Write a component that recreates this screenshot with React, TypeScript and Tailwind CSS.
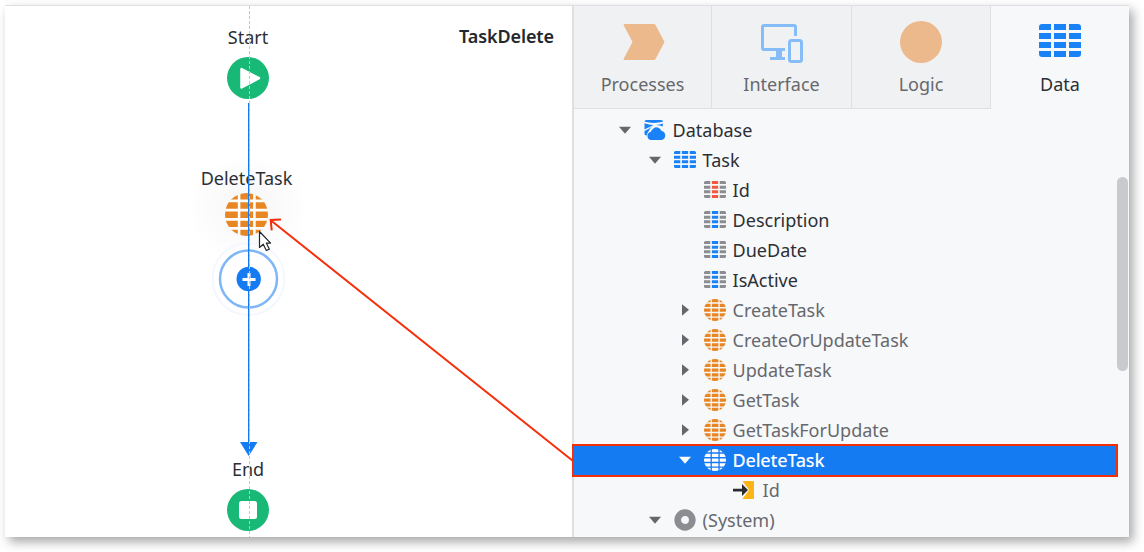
import React from "react";

type IconKind = "database" | "entity" | "key" | "attribute" | "action" | "actionSelected" | "input" | "system";
type Arrow = "open" | "closed" | "none";

interface TreeItem {
  label: string;
  level: 0 | 1 | 2 | 3;
  icon: IconKind;
  arrow: Arrow;
  muted?: boolean;
  selected?: boolean;
}

const items: TreeItem[] = [
  { label: "Database", level: 0, icon: "database", arrow: "open" },
  { label: "Task", level: 1, icon: "entity", arrow: "open" },
  { label: "Id", level: 2, icon: "key", arrow: "none" },
  { label: "Description", level: 2, icon: "attribute", arrow: "none" },
  { label: "DueDate", level: 2, icon: "attribute", arrow: "none" },
  { label: "IsActive", level: 2, icon: "attribute", arrow: "none" },
  { label: "CreateTask", level: 2, icon: "action", arrow: "closed", muted: true },
  { label: "CreateOrUpdateTask", level: 2, icon: "action", arrow: "closed", muted: true },
  { label: "UpdateTask", level: 2, icon: "action", arrow: "closed", muted: true },
  { label: "GetTask", level: 2, icon: "action", arrow: "closed", muted: true },
  { label: "GetTaskForUpdate", level: 2, icon: "action", arrow: "closed", muted: true },
  { label: "DeleteTask", level: 2, icon: "actionSelected", arrow: "open", selected: true },
  { label: "Id", level: 3, icon: "input", arrow: "none", muted: true },
  { label: "(System)", level: 1, icon: "system", arrow: "open", muted: true },
];

const indent = ["pl-9", "pl-[66px]", "pl-24", "pl-[126px]"];

function TableIcon({ side, middle, className }: { side: string; middle: string; className: string }) {
  return (
    <svg viewBox="0 0 42 33" className={className} preserveAspectRatio="none">
      <path fill={side} d="M3 0h9v6H0V3a3 3 0 0 1 3-3zM30 0h9a3 3 0 0 1 3 3v3H30zM0 9h12v6H0zM30 9h12v6H30zM0 18h12v6H0zM30 18h12v6H30zM0 27h12v6H3a3 3 0 0 1-3-3zM30 27h12v3a3 3 0 0 1-3 3h-9z" />
      <path fill={middle} d="M15 0h12v6H15zM15 9h12v6H15zM15 18h12v6H15zM15 27h12v6H15z" />
    </svg>
  );
}

function GlobeIcon({ color, id, className }: { color: string; id: string; className: string }) {
  return (
    <svg viewBox="0 0 42 42" className={className}>
      <clipPath id={id}>
        <circle cx="21" cy="21" r="21" />
      </clipPath>
      <g clipPath={`url(#${id})`} fill={color}>
        {[0, 9, 18, 27, 36].map((y) => (
          <path key={y} d={`M0 ${y}h12.5v6.3H0zM15 ${y}h12.5v6.3H15zM30 ${y}h12v6.3H30z`} />
        ))}
      </g>
    </svg>
  );
}

function NodeIcon({ kind, id }: { kind: IconKind; id: string }) {
  switch (kind) {
    case "database":
      return (
        <svg viewBox="0 0 22 20" className="h-5 w-[22px]">
          <path fill="#1a82f7" d="M0.5 1.8Q0.5 0 2.5 0h14.500Q19 0 19 1.800Q10 4 0.500 1.800z" />
          <path fill="#1a82f7" d="M0.500 3.300Q5 5 9.500 5L0.500 9.500zM12 4.900Q16 4.500 18.800 3.400V6.500Q15.800 4.900 12 4.900z" />
          <path fill="#1a82f7" d="M0.500 11Q5 9 8 6.500Q5.500 9 4.500 11.500Q3 13 2.800 15.500L1 15Q0.500 14.500 0.500 13z" />
          <path fill="#1a82f7" d="M7.200 20a4 4 0 0 1-.6-7.900Q8.500 8 12 7.200Q15.800 7.500 17.600 10.900a4.700 4.700 0 0 1 .2 9.100z" />
        </svg>
      );
    case "entity":
      return <TableIcon side="#1a82f7" middle="#1a82f7" className="h-[17px] w-[22px] -translate-y-px" />;
    case "key":
      return <TableIcon side="#8b8d91" middle="#f0593e" className="h-[17px] w-[22px] -translate-y-px" />;
    case "attribute":
      return <TableIcon side="#8b8d91" middle="#1a82f7" className="h-[17px] w-[22px] -translate-y-px" />;
    case "action":
      return <GlobeIcon color="#e98624" id={id} className="size-[22px]" />;
    case "actionSelected":
      return <GlobeIcon color="#ffffff" id={id} className="size-[22px]" />;
    case "input":
      return (
        <svg viewBox="0 0 22 18" className="h-[18px] w-[22px] -translate-x-px">
          <path fill="#fdb515" d="M9.500 0H20a1 1 0 0 1 1 1v16a1 1 0 0 1-1 1H9.500l6.500-9z" />
          <path fill="#2b2c30" d="M0 7.700h9V3l6 6-6 6v-4.500H0z" />
        </svg>
      );
    case "system":
      return (
        <svg viewBox="0 0 22 22" className="size-[22px]">
          <circle cx="11" cy="11" r="7.300" fill="none" stroke="#8b8d91" strokeWidth="6.700" />
        </svg>
      );
  }
}

function ExpandArrow({ arrow, selected }: { arrow: Arrow; selected?: boolean }) {
  if (arrow === "none") return null;
  return (
    <svg viewBox="0 0 12 12" className="size-3">
      <path fill={selected ? "#ffffff" : "#65676b"} d={arrow === "open" ? "M0 2.800h12L6 9.800z" : "M3 0.200l7 5.600L3 11.800z"} />
    </svg>
  );
}

function TreeRow({ item, index }: { item: TreeItem; index: number }) {
  const tone = item.selected
    ? "bg-[#147bf3] font-medium tracking-[-0.2px] text-white"
    : item.muted
      ? "text-[#66686d]"
      : "text-[#2c2f34]";
  return (
    <li className={`flex h-[30px] items-center ${indent[item.level]} ${tone}`}>
      <span className="flex w-[30px] shrink-0 justify-center">
        <ExpandArrow arrow={item.arrow} selected={item.selected} />
      </span>
      <span className="flex w-[30px] shrink-0 justify-center">
        <NodeIcon kind={item.icon} id={`tree-globe-${index}`} />
      </span>
      <span className="ml-[2.6px] whitespace-nowrap text-lg leading-[30px]">{item.label}</span>
    </li>
  );
}

function Tab({ label, active, className, children }: { label: string; active?: boolean; className: string; children: React.ReactNode }) {
  return (
    <button
      className={`flex h-[103px] flex-col items-center ${className} ${active ? "text-[#2c2f34]" : "border-r border-b border-[#dee0e3] bg-[#f0f1f3] text-[#66686d]"}`}
    >
      <span className="mt-3.5 flex h-11 items-start justify-center">{children}</span>
      <span className="mt-[5px] text-lg leading-[30px]">{label}</span>
    </button>
  );
}

function FlowCanvas() {
  return (
    <section className="relative h-full w-[567px] shrink-0 overflow-hidden bg-white text-lg leading-6 text-[#2c2f34]">
      <h1 className="absolute top-[18px] right-[18px] font-semibold tracking-[-0.1px] text-[#24272c]">TaskDelete</h1>
      <span className="absolute top-[19px] left-[243px] -translate-x-1/2">Start</span>
      <span className="absolute top-[451px] left-[243px] -translate-x-1/2">End</span>
      <div className="absolute top-[148px] left-[181px] h-[108px] w-[124px] bg-[radial-gradient(closest-side,rgba(0,0,0,0.04),rgba(0,0,0,0.015)_60%,transparent)]" />
      <span className="absolute top-[160px] left-[241.5px] -translate-x-1/2">DeleteTask</span>
      <svg viewBox="5 6 567 531" className="absolute inset-0 h-[531px] w-[567px]">
        <circle cx="248" cy="78" r="21" fill="#18b877" />
        <path d="M241.500 69v18.500l17.500-9.300z" fill="#fff" stroke="#fff" strokeWidth="2.500" strokeLinejoin="round" />
        <circle cx="248" cy="510" r="21" fill="#18b877" />
        <rect x="239" y="501" width="18" height="18" rx="2.500" fill="#fff" />
        <circle cx="248.500" cy="279" r="36" fill="none" stroke="#f4f8fe" strokeWidth="2" />
        <circle cx="248.500" cy="279" r="28.500" fill="#fff" stroke="#7fb6f8" strokeWidth="2.500" />
        <circle cx="248.700" cy="279" r="12.200" fill="#147bf3" />
        <circle cx="246.500" cy="214.500" r="21" fill="#fff" />
      </svg>
      <GlobeIcon color="#e98624" id="canvas-globe" className="absolute top-[187px] left-[220px] size-[43px]" />
      <svg viewBox="5 6 567 531" className="absolute inset-0 h-[531px] w-[567px]">
        <path d="M248.750 103V443" stroke="#147bf3" strokeWidth="1.500" />
        <path d="M240 442h17.500L248.700 456z" fill="#147bf3" />
        <path d="M242.500 279.500h13M249 273v13" stroke="#fff" strokeWidth="3" />
        <path d="M249.500 6v531" stroke="#c4c6ca" strokeWidth="1" strokeDasharray="3 2" />
        <path d="M259.500 231.500V247.500l3.800-3.300 3 6.300 3-1.400-3-6h4.300z" fill="#fff" stroke="#24262b" strokeWidth="1.200" strokeLinejoin="round" />
      </svg>
    </section>
  );
}

export default function App() {
  return (
    <main className="relative h-[552px] w-[1144px] overflow-hidden bg-white pt-[5px] pl-[5px] font-['Noto_Sans',sans-serif]">
      <div className="flex h-[532px] w-[1124px] border-t border-[#dee0e3] shadow-[4px_5px_10px_rgba(0,0,0,0.35)]">
        <FlowCanvas />
        <section className="h-full flex-1 border-l-2 border-[#dee0e3] bg-[#f7f8fa]">
          <nav className="flex">
            <Tab label="Processes" className="w-[138px]">
              <svg viewBox="0 0 42 36" className="mt-1 ml-0.5 h-9 w-[42px]">
                <path fill="#ecb98c" d="M1.500 0H31q1 0 1.500 1L41.500 18 32.500 35q-.5 1-1.500 1H1.500Q0 36 .8 34.500L9.500 18 .8 1.500Q0 0 1.500 0z" />
              </svg>
            </Tab>
            <Tab label="Interface" className="w-[140px]">
              <svg viewBox="0 0 42 39" className="mt-1 h-[39px] w-[42px]">
                <path fill="none" stroke="#86bcf7" strokeWidth="3" d="M34.500 12V3q0-1.500-1.500-1.500H3Q1.500 1.500 1.500 3v21q0 1.500 1.500 1.500h21M9 34.500h15" />
                <path fill="#86bcf7" d="M15 26h6v8h-6z" />
                <rect x="28.500" y="16.500" width="12" height="21" rx="2" fill="none" stroke="#86bcf7" strokeWidth="3" />
              </svg>
            </Tab>
            <Tab label="Logic" className="w-[139px]">
              <svg viewBox="0 0 42 42" className="mt-px size-[42px]">
                <circle cx="21" cy="21" r="21" fill="#ecb98c" />
              </svg>
            </Tab>
            <Tab label="Data" active className="flex-1">
              <TableIcon side="#1a82f7" middle="#1a82f7" className="mt-1 h-[33px] w-[42px]" />
            </Tab>
          </nav>
          <div className="flex justify-between">
            <ul className="w-[543px] pt-1.5">
              {items.map((item, index) => (
                <TreeRow key={index} item={item} index={index} />
              ))}
            </ul>
            <div className="mt-[68px] mr-px h-[194px] w-[11px] rounded-full bg-[#c8cacd]" />
          </div>
        </section>
      </div>
      <div className="absolute top-[444px] left-[572px] h-[33px] w-[546px] border-2 border-[#f52f0a]" />
      <svg viewBox="0 0 1144 552" className="absolute inset-0 h-[552px] w-[1144px]">
        <path d="M573 461L271 220.500M281 219.500l-10.300.5 1 10.300" fill="none" stroke="#f52f0a" strokeWidth="2" />
      </svg>
    </main>
  );
}
